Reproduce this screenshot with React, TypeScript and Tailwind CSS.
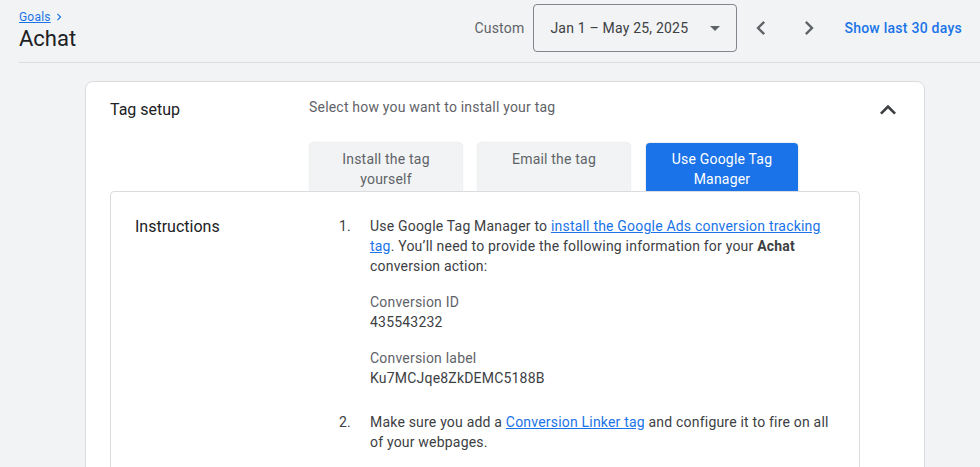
import React from 'react';

const Chevron: React.FC<{ dir: 'left' | 'right' | 'up'; className?: string }> = ({ dir, className }) => {
  const d = {
    left: 'M15.41 7.41L14 6l-6 6 6 6 1.41-1.41L10.83 12z',
    right: 'M8.59 16.59L10 18l6-6-6-6-1.41 1.41L13.17 12z',
    up: 'M12 8l-6 6 1.41 1.41L12 10.83l4.59 4.58L18 14z',
  }[dir];
  return (
    <svg viewBox="0 0 24 24" className={className} fill="currentColor">
      <path d={d} />
    </svg>
  );
};

const tabs = [
  { label: 'Install the tag yourself', active: false },
  { label: 'Email the tag', active: false },
  { label: 'Use Google Tag Manager', active: true },
];

const App: React.FC = () => {
  return (
    <div className="min-h-screen bg-[#f1f3f4] pl-[19px] font-['Roboto',sans-serif] tracking-[0.2px] text-[#3c4043]">
      {/* page header */}
      <div className="flex h-[63px] justify-between border-b border-[#dadce0]">
        <div className="pt-[9px]">
          <div className="flex items-center text-xs leading-4">
            <a href="#" className="text-[#1a73e8] underline">Goals</a>
            <Chevron dir="right" className="ml-[1px] h-[14px] w-[14px] text-[#1a73e8]" />
          </div>
          <h1 className="text-[22px] leading-7 tracking-normal text-[#202124]">Achat</h1>
        </div>
        <div className="flex items-start pt-1 pr-[18px]">
          <div className="flex h-12 items-center">
            <span className="mr-[9px] text-sm text-[#5f6368]">Custom</span>
            <button className="flex h-12 w-[204px] items-center justify-between rounded border border-[#80868b] pl-4 pr-4 text-sm tracking-[0.2px] text-[#3c4043]">
              <span>Jan 1 – May 25, 2025</span>
              <svg viewBox="0 0 10 5" className="h-[5px] w-[10px] text-[#5f6368]" fill="currentColor">
                <path d="M0 0h10L5 5z" />
              </svg>
            </button>
            <button className="flex h-12 w-12 items-center justify-center text-[#5f6368]">
              <Chevron dir="left" className="h-7 w-7" />
            </button>
            <button className="flex h-12 w-12 items-center justify-center text-[#5f6368]">
              <Chevron dir="right" className="h-7 w-7" />
            </button>
            <button className="ml-[11px] text-sm font-medium tracking-[0.25px] text-[#1a73e8]">Show last 30 days</button>
          </div>
        </div>
      </div>

      {/* tag setup card */}
      <div className="ml-[66px] mt-[18px] w-[840px] rounded-lg border border-[#dadce0] bg-white px-6 pt-4 pb-10">
        <div className="flex h-6 items-start">
          <h2 className="w-[199px] text-base leading-6 tracking-normal text-[#202124]">Tag setup</h2>
          <p className="-mt-[1px] flex-1 text-sm leading-5 text-[#5f6368]">Select how you want to install your tag</p>
          <Chevron dir="up" className="-mr-1 -my-1 h-8 w-8 text-[#3c4043]" />
        </div>

        <div className="mt-[21px] flex gap-4 pl-[200px]">
          {tabs.map((t) => (
            <div
              key={t.label}
              className={`h-12 w-[152px] rounded-t px-6 pt-1.5 text-center text-sm leading-5 shadow-[0_0_2px_rgba(60,64,67,0.3)] ${
                t.active ? 'bg-[#1a73e8] text-white' : 'bg-[#f1f3f4] text-[#5f6368]'
              }`}
            >
              {t.label}
            </div>
          ))}
        </div>

        <div className="relative w-[750px] rounded border border-[#dadce0] bg-white pt-6 pb-16 pl-6">
          <div className="flex">
            <h3 className="-mt-[1px] w-[204px] text-base leading-6 tracking-normal text-[#202124]">Instructions</h3>
            <ol className="w-[495px] text-sm leading-5 text-[#3c4043]">
              <li className="flex">
                <span className="w-[31px] shrink-0">1.</span>
                <div>
                  <p>
                    Use Google Tag Manager to{' '}
                    <a href="#" className="text-[#1a73e8] underline">install the Google Ads conversion tracking tag</a>. You’ll need to provide the following information for your{' '}
                    <b className="font-bold text-[#3c4043]">Achat</b> conversion action:
                  </p>
                  <div className="mt-4">
                    <p className="text-[#5f6368]">Conversion ID</p>
                    <p>435543232</p>
                  </div>
                  <div className="mt-4">
                    <p className="text-[#5f6368]">Conversion label</p>
                    <p>Ku7MCJqe8ZkDEMC5188B</p>
                  </div>
                </div>
              </li>
              <li className="mt-6 flex">
                <span className="w-[31px] shrink-0">2.</span>
                <p>
                  Make sure you add a{' '}
                  <a href="#" className="text-[#1a73e8] underline">Conversion Linker tag</a> and configure it to fire on all
                  <br />
                  of your webpages.
                </p>
              </li>
            </ol>
          </div>
        </div>
      </div>
    </div>
  );
};

export default App;
